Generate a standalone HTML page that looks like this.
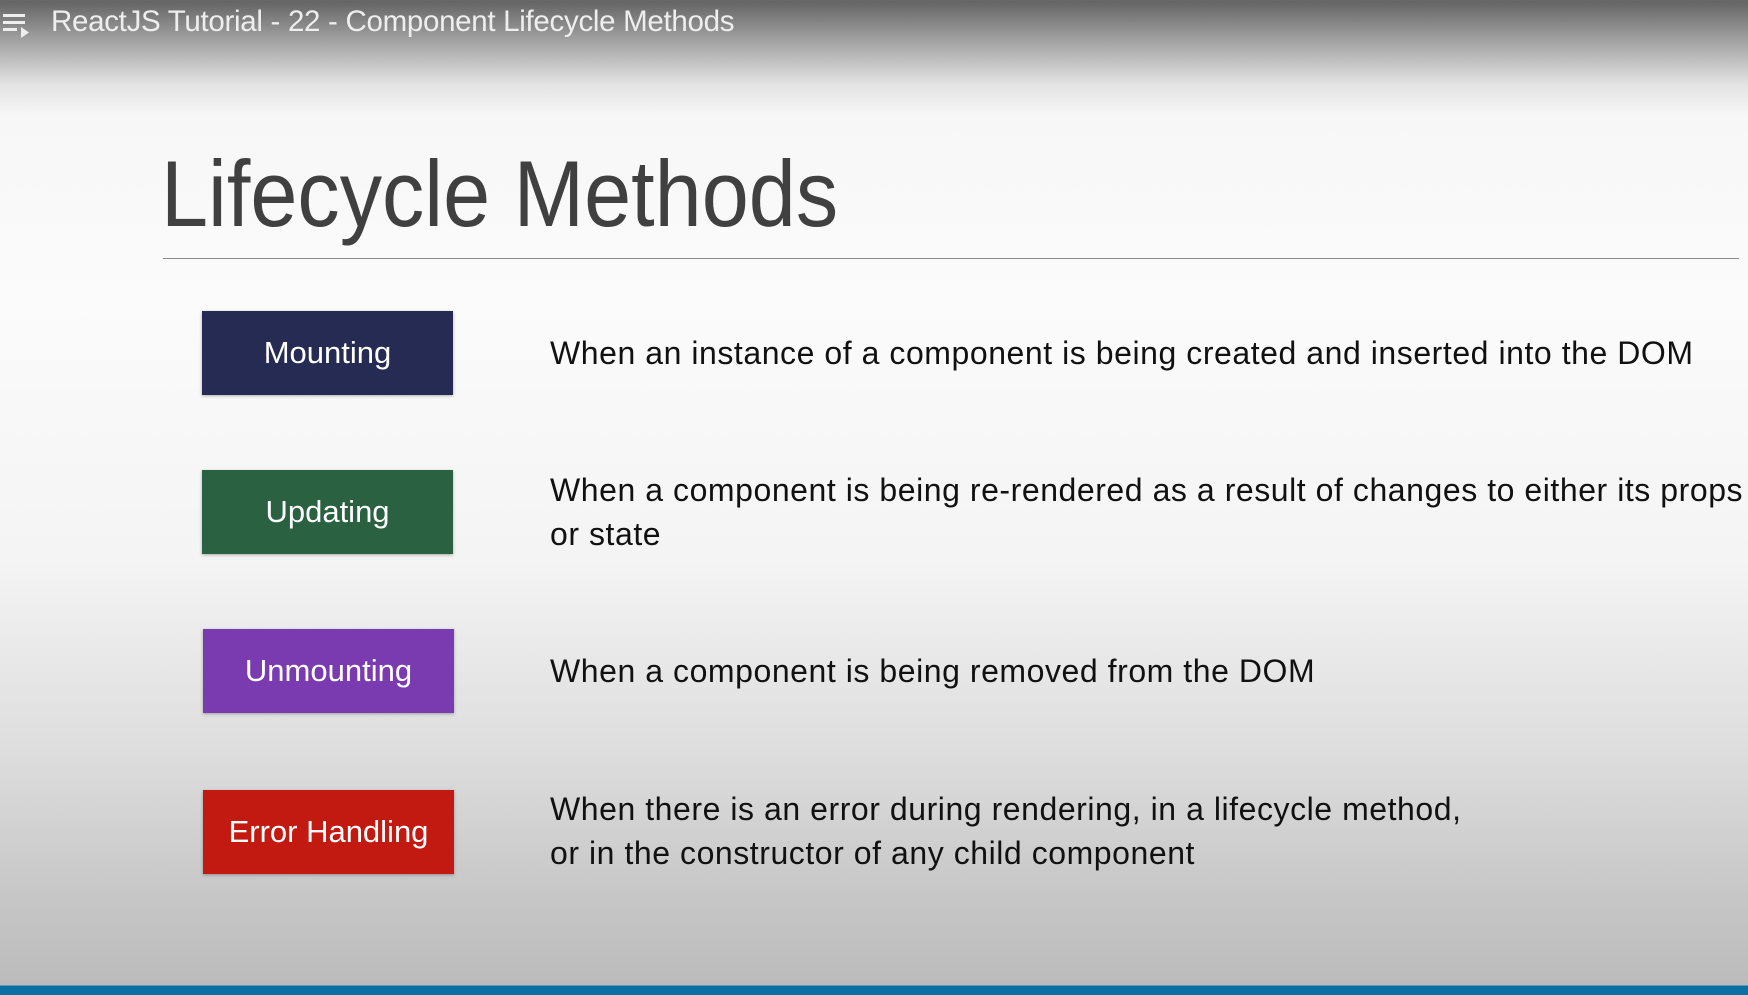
<!DOCTYPE html>
<html><head><style>
html,body{margin:0;padding:0}
body{width:1748px;height:994px;position:relative;overflow:hidden;font-family:"Liberation Sans",sans-serif;
background:linear-gradient(to bottom,#626262 0px,#a9a9a9 45px,#e4e4e4 85px,#f7f7f7 115px,#fbfbfb 300px,#f4f4f4 560px,#dcdcdc 760px,#c6c6c6 900px,#bbbbbb 984px);}
.top{position:absolute;left:51px;top:5px;font-size:29.5px;color:#eeeeee;letter-spacing:-0.3px;white-space:nowrap}
.ic{position:absolute;left:3px;top:14px}
h1{position:absolute;left:161px;top:140px;margin:0;font-weight:normal;font-size:94px;color:#404040;white-space:nowrap;transform:scaleX(0.9);transform-origin:0 0}
.rule{position:absolute;left:163px;top:258px;width:1576px;height:1px;background:#8a8a8a}
.box{position:absolute;width:251px;height:84px;color:#fff;font-size:31px;display:flex;align-items:center;justify-content:center;box-shadow:0 1px 3px rgba(0,0,0,.3)}
.t{position:absolute;left:550px;font-size:32px;color:#111;line-height:43.5px;white-space:nowrap;letter-spacing:0.55px}
.bar{position:absolute;left:0;top:985px;width:1748px;height:9px;background:#0b6fa6;border-top:1px solid #5a9ab8}
</style></head><body>
<svg class="ic" width="30" height="26" viewBox="0 0 30 26"><rect x="0" y="0" width="22" height="3" fill="#eee"/><rect x="0" y="7" width="22" height="3" fill="#eee"/><rect x="0" y="14" width="14" height="3" fill="#eee"/><polygon points="18,13 18,24 26,18.5" fill="#eee"/></svg>
<div class="top">ReactJS Tutorial - 22 - Component Lifecycle Methods</div>
<h1>Lifecycle Methods</h1>
<div class="rule"></div>
<div class="box" style="left:202px;top:311px;background:#252b52">Mounting</div>
<div class="box" style="left:202px;top:470px;background:#2a6141">Updating</div>
<div class="box" style="left:203px;top:629px;background:#7a3bb0">Unmounting</div>
<div class="box" style="left:203px;top:790px;background:#c21a10">Error Handling</div>
<div class="t" style="top:332px">When an instance of a component is being created and inserted into the DOM</div>
<div class="t" style="top:469px">When a component is being re-rendered as a result of changes to either its props<br>or state</div>
<div class="t" style="top:650px">When a component is being removed from the DOM</div>
<div class="t" style="top:788px">When there is an error during rendering, in a lifecycle method,<br>or in the constructor of any child component</div>
<div class="bar"></div>
</body></html>
